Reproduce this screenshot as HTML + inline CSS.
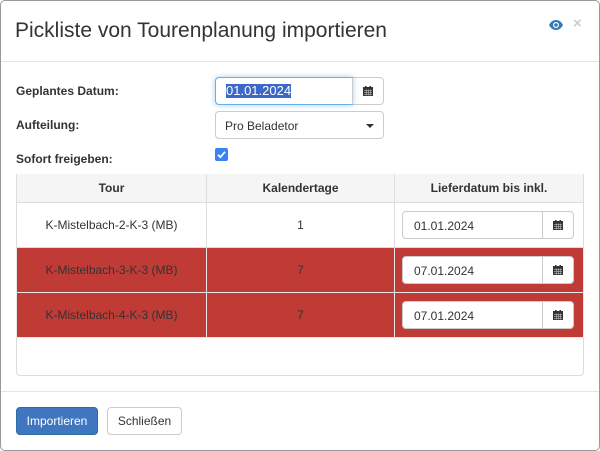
<!DOCTYPE html>
<html><head><style>
*{box-sizing:border-box;margin:0;padding:0}
body{width:600px;height:451px;background:#fff;font-family:"Liberation Sans",sans-serif;font-size:12px;color:#333;position:relative;overflow:hidden}
.dlg{position:absolute;left:0;top:0;width:600px;height:451px;border:1px solid #999;border-radius:5px}
.abs{position:absolute}
.title{left:15px;top:19px;font-size:21px;color:#333}
.hr{left:1px;width:598px;height:1px;background:#e5e5e5}
.lbl{left:16px;font-weight:bold;font-size:12px}
.inp{border:1px solid #ccc;background:#fff;border-radius:4px}
.calwrap{position:absolute;display:flex;align-items:center;justify-content:center;border-left:1px solid #ccc;top:0;bottom:0}
table{position:absolute;left:16px;top:174px;width:568px;border-collapse:collapse}
td,th{border:1px solid #ddd;text-align:center;font-size:12px}
th{height:28px;background:#f5f5f5;font-weight:bold;border-top:none}
td{height:45px}
tr.red td{background:#c03b35;border-color:#e8e8e8;color:#333}
.btn{position:absolute;top:407px;height:28px;border-radius:4px;font-size:12px;display:flex;align-items:center;justify-content:center}
</style></head><body>
<svg width="0" height="0" style="position:absolute"><defs><symbol id="cal" viewBox="0 0 10 10"><rect x="0" y="1" width="10" height="9" fill="#333"/><rect x="2" y="0" width="1.5" height="2" fill="#333"/><rect x="6.5" y="0" width="1.5" height="2" fill="#333"/><g fill="#bbb"><rect x="1" y="4" width="8" height="0.6"/><rect x="1" y="6" width="8" height="0.6"/><rect x="1" y="8" width="8" height="0.6"/><rect x="3" y="3.5" width="0.6" height="6"/><rect x="5" y="3.5" width="0.6" height="6"/><rect x="7" y="3.5" width="0.6" height="6"/></g></symbol></defs></svg>
<div class="dlg"></div>
<div class="abs title">Pickliste von Tourenplanung importieren</div>
<svg class="abs" style="left:548px;top:19px" width="16" height="12" viewBox="0 0 16 12"><path d="M1 6C3 2 6 1 8 1s5 1 7 5c-2 4-5 5-7 5S3 10 1 6z" fill="#337ab7"/><circle cx="8" cy="6" r="3" fill="#fff"/><circle cx="8" cy="6" r="1.8" fill="#337ab7"/></svg>
<div class="abs" style="left:573px;top:15px;font-size:15px;font-weight:bold;color:#ccc">×</div>
<div class="abs hr" style="top:61px"></div>
<div class="abs lbl" style="top:84px">Geplantes Datum:</div>
<div class="abs lbl" style="top:118px">Aufteilung:</div>
<div class="abs lbl" style="top:152px">Sofort freigeben:</div>
<div class="abs inp" style="left:215px;top:77px;width:169px;height:28px">
 <div class="abs" style="left:-1px;top:-1px;width:138px;height:28px;border:1px solid #66afe9;border-radius:4px 0 0 4px;box-shadow:0 0 6px rgba(102,175,233,.6)"></div>
 <span class="abs" style="left:10px;top:6px;background:#3b68c9;color:#fff;font-size:13px;line-height:14px">01.01.2024</span>
 <div class="calwrap" style="left:136px;width:31px"><svg width="10" height="10"><use href="#cal"/></svg></div>
</div>
<div class="abs inp" style="left:215px;top:111px;width:169px;height:28px">
 <span class="abs" style="left:9px;top:7px;font-size:12px">Pro Beladetor</span>
 <span class="abs" style="left:150px;top:12px;border-left:4px solid transparent;border-right:4px solid transparent;border-top:4px solid #333"></span>
</div>
<svg class="abs" style="left:215px;top:148px" width="13" height="13" viewBox="0 0 13 13"><rect width="13" height="13" rx="2" fill="#3b82f6"/><path d="M3 6.8l2.3 2.4L10 3.8" stroke="#fff" stroke-width="1.8" fill="none"/></svg>
<div class="abs" style="left:16px;top:174px;width:568px;height:202px;border:1px solid #ddd;border-radius:4px"></div>
<table>
<tr><th style="width:190px">Tour</th><th style="width:188px">Kalendertage</th><th>Lieferdatum bis inkl.</th></tr>
<tr><td>K-Mistelbach-2-K-3 (MB)</td><td>1</td><td></td></tr>
<tr class="red"><td>K-Mistelbach-3-K-3 (MB)</td><td>7</td><td></td></tr>
<tr class="red"><td>K-Mistelbach-4-K-3 (MB)</td><td>7</td><td></td></tr>
</table>
<div class="abs inp" style="left:402px;top:211px;width:172px;height:28px"><span class="abs" style="left:11px;top:7px">01.01.2024</span><div class="calwrap" style="left:139px;width:31px"><svg width="10" height="10"><use href="#cal"/></svg></div></div>
<div class="abs inp" style="left:402px;top:256px;width:172px;height:28px"><span class="abs" style="left:11px;top:7px">07.01.2024</span><div class="calwrap" style="left:139px;width:31px"><svg width="10" height="10"><use href="#cal"/></svg></div></div>
<div class="abs inp" style="left:402px;top:301px;width:172px;height:28px"><span class="abs" style="left:11px;top:7px">07.01.2024</span><div class="calwrap" style="left:139px;width:31px"><svg width="10" height="10"><use href="#cal"/></svg></div></div>
<div class="abs hr" style="top:391px"></div>
<div class="btn" style="left:16px;width:82px;background:#3f76bf;color:#fff;border:1px solid #2e6da4">Importieren</div>
<div class="btn" style="left:107px;width:75px;background:#fff;border:1px solid #ccc;color:#333">Schließen</div>
</body></html>
